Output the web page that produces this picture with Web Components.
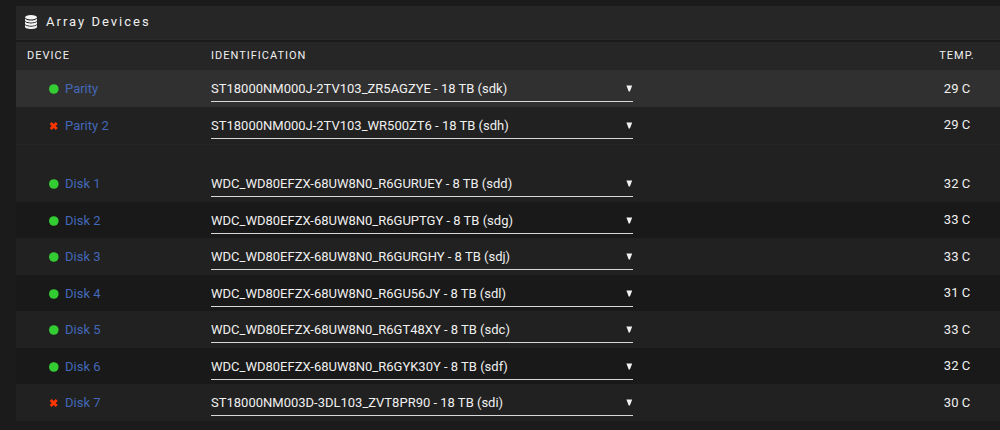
<!DOCTYPE html>
<html lang="en">
<head>
<meta charset="utf-8">
<title>Array Devices</title>
<style>
  body {
    margin: 0;
    padding: 6px 0 10px 16px;
    background: #1b1b1b;
    color: #f0f0f0;
    font: 13px/18px Roboto, "Liberation Sans", sans-serif;
  }
</style>
</head>
<body>

<template id="array-panel">
  <style>
    :host { display: block; }
    header {
      display: flex;
      align-items: center;
      gap: 9px;
      padding: 7px 9px 8px;
      background: #262626;
      border-bottom: 1px solid #2a2a2a;
      margin-bottom: 2px;
    }
    h1 { margin: 0; font-size: 13px; font-weight: 400; letter-spacing: 2px; }
    ::slotted(svg) { width: 12px; height: 14px; }
  </style>
  <header><slot name="icon"></slot><h1><slot name="title"></slot></h1></header>
  <slot></slot>
</template>

<template id="device-table">
  <style>
    :host { display: block; }
    table { width: 100%; border-collapse: collapse; table-layout: fixed; }
    .device { width: 184px; }
    .temp { width: 86px; }
    th, td { padding: 0 0 0 11px; text-align: left; font-weight: 400; vertical-align: middle; }
    th:last-child, td:last-child { padding: 0; text-align: center; }
    thead tr { height: 28px; background: #262626; }
    th { font-size: 11px; line-height: 16px; letter-spacing: 1px; }
    tbody tr { height: 37px; background: #212121; }
    tbody tr.active { background: #303030; }
    tbody.disks tr:nth-child(even) { height: 36px; background: #191919; }
    tbody.parity { border-bottom: 1px solid #262626; }
    tbody.gap tr { height: 21px; }
  </style>
  <table>
    <colgroup><col class="device"><col><col class="temp"></colgroup>
    <thead><tr><th scope="col">DEVICE</th><th scope="col">IDENTIFICATION</th><th scope="col">TEMP.</th></tr></thead>
    <tbody class="parity"></tbody>
    <tbody class="gap"><tr><td colspan="3"></td></tr></tbody>
    <tbody class="disks"></tbody>
  </table>
</template>

<template id="device-name">
  <style>
    :host { display: flex; align-items: center; gap: 6px; padding: 1px 0 0 22px; }
    svg { width: 10px; height: 10px; flex: none; }
    .fail { display: none; fill: #ff3600; }
    .ok { fill: #33cc33; }
    :host([state="disabled"]) .ok { display: none; }
    :host([state="disabled"]) .fail { display: block; }
    a { color: #4468b8; text-decoration: none; }
  </style>
  <svg class="ok" viewBox="0 0 10 10" aria-hidden="true"><circle cx="4.8" cy="5" r="4.8"/></svg>
  <svg class="fail" viewBox="0 0 10 10" aria-hidden="true"><path d="M.7 2.9 2.700 .900 4.700 2.900 6.700 .900 8.700 2.900 6.700 5 8.700 7.100 6.700 9.100 4.700 7.100 2.700 9.100 .7 7.100 2.700 5Z"/></svg>
  <a href="#"><slot></slot></a>
</template>

<template id="device-select">
  <style>
    :host { display: grid; width: 422px; max-width: 100%; align-items: center; }
    select, svg { grid-area: 1 / 1; }
    select {
      appearance: none;
      width: 100%;
      height: 27px;
      margin: 0;
      padding: 2px 20px 0 0;
      border: 0;
      border-bottom: 1px solid #d8d8d8;
      border-radius: 0;
      outline: 0;
      background: transparent;
      color: inherit;
      font: inherit;
    }
    option { background: #262626; }
    svg { justify-self: end; width: 7px; height: 7px; fill: #f2f2f2; pointer-events: none; }
  </style>
  <select></select>
  <svg viewBox="0 0 7 7" aria-hidden="true"><path d="M.4 .4H6.200L3.900 6.600H2.700Z"/></svg>
</template>

<script>
  class TemplateElement extends HTMLElement {
    constructor() {
      super();
      this.attachShadow({ mode: 'open' })
        .append(document.getElementById(this.localName).content.cloneNode(true));
    }
  }

  customElements.define('array-panel', class extends TemplateElement {});
  customElements.define('device-name', class extends TemplateElement {});

  customElements.define('device-select', class extends TemplateElement {
    connectedCallback() {
      const select = this.shadowRoot.querySelector('select');
      select.setAttribute('aria-label', this.getAttribute('label'));
      select.replaceChildren(new Option(this.getAttribute('value')));
    }
  });

  const devices = {
    parity: [
      ['Parity', 'ST18000NM000J-2TV103_ZR5AGZYE - 18 TB (sdk)', 29, 'active'],
      ['Parity 2', 'ST18000NM000J-2TV103_WR500ZT6 - 18 TB (sdh)', 29, 'disabled'],
    ],
    disks: [
      ['Disk 1', 'WDC_WD80EFZX-68UW8N0_R6GURUEY - 8 TB (sdd)', 32],
      ['Disk 2', 'WDC_WD80EFZX-68UW8N0_R6GUPTGY - 8 TB (sdg)', 33],
      ['Disk 3', 'WDC_WD80EFZX-68UW8N0_R6GURGHY - 8 TB (sdj)', 33],
      ['Disk 4', 'WDC_WD80EFZX-68UW8N0_R6GU56JY - 8 TB (sdl)', 31],
      ['Disk 5', 'WDC_WD80EFZX-68UW8N0_R6GT48XY - 8 TB (sdc)', 33],
      ['Disk 6', 'WDC_WD80EFZX-68UW8N0_R6GYK30Y - 8 TB (sdf)', 32],
      ['Disk 7', 'ST18000NM003D-3DL103_ZVT8PR90 - 18 TB (sdi)', 30, 'disabled'],
    ],
  };

  customElements.define('device-table', class extends TemplateElement {
    connectedCallback() {
      for (const [group, rows] of Object.entries(devices)) {
        this.shadowRoot.querySelector('.' + group).innerHTML = rows.map(([name, id, temp, state = '']) => `
          <tr class="${state}">
            <td><device-name state="${state}">${name}</device-name></td>
            <td><device-select label="${name} identification" value="${id}"></device-select></td>
            <td>${temp} C</td>
          </tr>`).join('');
      }
    }
  });
</script>

<array-panel>
  <svg slot="icon" viewBox="0 0 12 14" aria-hidden="true">
    <ellipse cx="6" cy="2.2" rx="6" ry="2.2" fill="#f5f5f5"/>
    <path fill="#f5f5f5" d="M0 3.4C1 5 3.500 5.400 6 5.400S11 5 12 3.400V5.200C12 6.500 9.300 7.500 6 7.500S0 6.500 0 5.200ZM0 6.600C1 8 3.500 8.500 6 8.500S11 8 12 6.600V8.400C12 9.700 9.300 10.700 6 10.700S0 9.700 0 8.400ZM0 9.800C1 11.300 3.500 11.700 6 11.700S11 11.300 12 9.800V11.700C12 13 9.300 14 6 14S0 13 0 11.700Z"/>
  </svg>
  <span slot="title">Array Devices</span>
  <device-table></device-table>
</array-panel>

</body>
</html>
